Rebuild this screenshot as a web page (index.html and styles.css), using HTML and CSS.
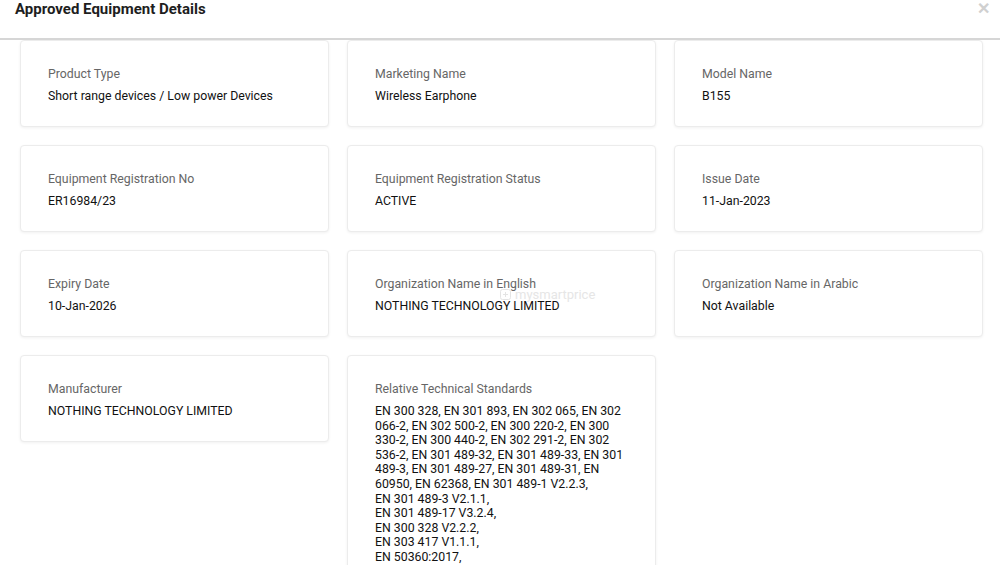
FILE: index.html
```html
<!DOCTYPE html>
<html lang="en">
<head>
<meta charset="utf-8">
<title>Approved Equipment Details</title>
<link rel="stylesheet" href="styles.css">
</head>
<body>
<div class="modal">
  <header class="modal-header">
    <h1 class="modal-title">Approved Equipment Details</h1>
    <span class="close" aria-label="Close">&#x2715;</span>
  </header>
  <div class="modal-body">
    <div class="grid">
      <div class="card"><div class="label">Product Type</div><div class="value">Short range devices / Low power Devices</div></div>
      <div class="card"><div class="label">Marketing Name</div><div class="value">Wireless Earphone</div></div>
      <div class="card"><div class="label">Model Name</div><div class="value">B155</div></div>
      <div class="card"><div class="label">Equipment Registration No</div><div class="value">ER16984/23</div></div>
      <div class="card"><div class="label">Equipment Registration Status</div><div class="value">ACTIVE</div></div>
      <div class="card"><div class="label">Issue Date</div><div class="value">11-Jan-2023</div></div>
      <div class="card"><div class="label">Expiry Date</div><div class="value">10-Jan-2026</div></div>
      <div class="card"><div class="label">Organization Name in English</div><div class="value">NOTHING TECHNOLOGY LIMITED</div><span class="watermark"><svg class="wm-icon" width="11" height="11" viewBox="0 0 11 11"><rect x="0.5" y="0.5" width="10" height="10" rx="2" fill="none" stroke="#e4e4e4"/><path d="M3 5.5h5M5.5 3v5" stroke="#e4e4e4"/></svg>mysmartprice</span></div>
      <div class="card"><div class="label">Organization Name in Arabic</div><div class="value">Not Available</div></div>
      <div class="card"><div class="label">Manufacturer</div><div class="value">NOTHING TECHNOLOGY LIMITED</div></div>
      <div class="card"><div class="label">Relative Technical Standards</div><div class="value">EN 300 328, EN 301 893, EN 302 065, EN 302 066&#8209;2, EN 302 500&#8209;2, EN 300 220&#8209;2, EN 300 330&#8209;2, EN 300 440&#8209;2, EN 302 291&#8209;2, EN 302 536&#8209;2, EN 301 489&#8209;32, EN 301 489&#8209;33, EN 301 489&#8209;3, EN 301 489&#8209;27, EN 301 489&#8209;31, EN 60950, EN 62368, EN 301 489&#8209;1 V2.2.3,<br>EN 301 489-3 V2.1.1,<br>EN 301 489-17 V3.2.4,<br>EN 300 328 V2.2.2,<br>EN 303 417 V1.1.1,<br>EN 50360:2017,<br>EN 50566:2017,<br>EN 62479:2010</div></div>
    </div>
  </div>
</div>
</body>
</html>
```

FILE: styles.css
```css
html, body {
  margin: 0;
  padding: 0;
  background: #fff;
  overflow: hidden;
}
body {
  font-family: Roboto, "Liberation Sans", Arial, sans-serif;
  color: #212121;
  width: 1000px;
  height: 565px;
}
.modal {
  display: flex;
  flex-direction: column;
  height: 565px;
}
.modal-header {
  height: 38px;
  flex: none;
  display: flex;
  justify-content: space-between;
  align-items: flex-start;
  border-bottom: 2px solid #d6d6d6;
  padding: 0 10px 0 15px;
}
.modal-title {
  margin: 0;
  font-size: 15px;
  font-weight: 700;
  line-height: 18px;
  color: #1e1e1e;
}
.close {
  margin-top: 1px;
  font-size: 16px;
  line-height: 16px;
  color: #d0d0d0;
  font-weight: 700;
}
.modal-body {
  flex: 1;
  overflow: hidden;
  padding: 0 17px 0 20px;
}
.grid {
  display: grid;
  grid-template-columns: repeat(3, 309px);
  column-gap: 18px;
  row-gap: 18px;
  align-items: start;
}
.card {
  background: #fff;
  border: 1px solid #ececec;
  border-radius: 4px;
  box-shadow: 0 1px 3px rgba(0, 0, 0, 0.06);
  padding: 25px 27px 22.4px 27px;
  position: relative;
}
.label {
  font-size: 12.3px;
  line-height: 16px;
  color: #666;
  margin-bottom: 7px;
}
.value {
  font-size: 12.3px;
  line-height: 14.6px;
  color: #111;
}
.watermark {
  position: absolute;
  left: 152px;
  top: 36px;
  display: flex;
  align-items: center;
  gap: 4px;
  font-size: 13px;
  color: #e6e6e6;
  pointer-events: none;
}
```
